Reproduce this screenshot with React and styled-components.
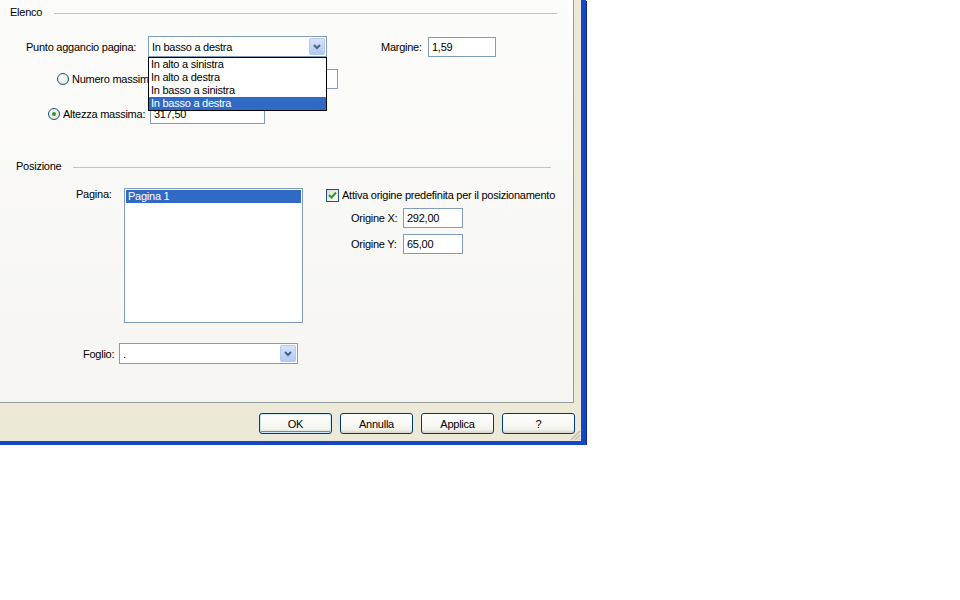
import React from "react"
import styled, { createGlobalStyle } from "styled-components"

const Global = createGlobalStyle`
  html, body {
    margin: 0;
    padding: 0;
    background: #ffffff;
  }
  body {
    font-family: "Liberation Sans", Arial, sans-serif;
    font-size: 11px;
    letter-spacing: -0.25px;
    color: #000;
  }
`

const Window = styled.div`
  width: 581px;
  height: 441px;
  background: #ece9d8;
  border-right: 5px solid #1646c8;
  border-bottom: 4px solid #1646c8;
  box-shadow: 1px 1px 0 #0a2a8f;
  display: flex;
  flex-direction: column;
`

const Panel = styled.div`
  width: 574px;
  height: 403px;
  box-sizing: border-box;
  background: linear-gradient(#fcfcfb, #f6f5f1);
  border-right: 1px solid #919b9c;
  border-bottom: 1px solid #919b9c;
  display: flex;
  flex-direction: column;
`

const GroupHeader = styled.div`
  height: 24px;
  display: flex;
  align-items: center;
  gap: 12px;
  padding-left: ${p => p.$left}px;
  padding-right: ${p => p.$right}px;
  margin-top: ${p => p.$top || 0}px;

  &::after {
    content: "";
    flex: 1;
    height: 1px;
    margin-top: 2px;
    background: #c4c4bc;
  }
`

const Row = styled.div`
  display: flex;
  align-items: center;
  padding-left: ${p => p.$left}px;
  margin-top: ${p => p.$top}px;
  height: ${p => p.$height || 20}px;
`

const Label = styled.span`
  display: inline-block;
  width: ${p => p.$width}px;
  flex-shrink: 0;
  white-space: nowrap;
  overflow: hidden;
`

const Input = styled.div`
  width: ${p => p.$width}px;
  height: 20px;
  box-sizing: border-box;
  border: 1px solid #7f9db9;
  background: #fff;
  padding: 2px 3px;
  line-height: 14px;
  margin-left: ${p => p.$gap || 0}px;
  flex-shrink: 0;
`

const ComboWrap = styled.div`
  position: relative;
  width: 179px;
  height: 21px;
  flex-shrink: 0;
`

const ComboBox = styled.div`
  height: 21px;
  box-sizing: border-box;
  border: 1px solid #7f9db9;
  background: #fff;
  display: flex;
  align-items: center;
  padding-left: 3px;
  padding-right: 1px;
`

const ComboText = styled.span`
  flex: 1;
`

const ArrowButton = styled.div`
  width: 16px;
  height: 17px;
  border-radius: 2px;
  border: 1px solid #b6c9ee;
  box-sizing: border-box;
  background: linear-gradient(#d6e3fb, #b3c9f4);
  display: flex;
  align-items: center;
  justify-content: center;
`

const DropList = styled.div`
  position: absolute;
  top: 21px;
  left: 0;
  width: 179px;
  box-sizing: border-box;
  border: 1px solid #000;
  background: #fff;
  z-index: 2;
`

const DropItem = styled.div`
  height: 13px;
  line-height: 13px;
  padding-left: 2px;
  background: ${p => (p.$selected ? "#316ac5" : "transparent")};
  color: ${p => (p.$selected ? "#fff" : "#000")};
`

const Radio = styled.span`
  width: 12px;
  height: 12px;
  border-radius: 50%;
  box-sizing: border-box;
  border: 1px solid #1c5180;
  background: radial-gradient(circle at 40% 35%, #ffffff, #dcdbd3);
  margin-right: 3px;
  flex-shrink: 0;
  display: flex;
  align-items: center;
  justify-content: center;

  &::after {
    content: "";
    width: 4px;
    height: 4px;
    border-radius: 50%;
    background: ${p => (p.$checked ? "#21a121" : "transparent")};
  }
`

const Check = styled.span`
  width: 13px;
  height: 13px;
  box-sizing: border-box;
  border: 1px solid #1c5180;
  background: linear-gradient(135deg, #dcdbd3, #ffffff);
  margin-right: 3px;
  flex-shrink: 0;
  display: flex;
  align-items: center;
  justify-content: center;
`

const Block = styled.div`
  display: flex;
  align-items: flex-start;
  padding-left: 76px;
  margin-top: 10px;
`

const ListBox = styled.div`
  width: 179px;
  height: 135px;
  box-sizing: border-box;
  border: 1px solid #7f9db9;
  background: #fff;
  padding: 1px;
  flex-shrink: 0;
`

const ListItem = styled.div`
  height: 13px;
  line-height: 13px;
  padding-left: 2px;
  background: ${p => (p.$selected ? "#316ac5" : "transparent")};
  color: ${p => (p.$selected ? "#fff" : "#000")};
`

const RightColumn = styled.div`
  margin-left: 23px;
  display: flex;
  flex-direction: column;
  gap: 6px;
`

const CheckRow = styled.div`
  display: flex;
  align-items: center;
  height: 14px;
`

const OriginRow = styled.div`
  display: flex;
  align-items: center;
  padding-left: 25px;
  height: 20px;
`

const Footer = styled.div`
  position: relative;
  flex: 1;
  display: flex;
  justify-content: flex-end;
  align-items: flex-start;
  gap: 8px;
  padding-top: 10px;
  padding-right: 6px;
`

const Button = styled.button`
  width: 73px;
  height: 21px;
  font-family: "Liberation Sans", Arial, sans-serif;
  font-size: 11px;
  letter-spacing: -0.25px;
  color: #000;
  border: 1px solid #003c74;
  border-radius: 3px;
  background: linear-gradient(#ffffff, #f3f3ee 80%, #d8d3c8);
  box-shadow: ${p => (p.$default ? "inset 0 0 0 1px #cee7ff, inset 0 -1px 0 1px #6982ee" : "none")};
  padding: 0;
`

const Grip = styled.svg`
  position: absolute;
  right: 0;
  bottom: 0;
`

function Chevron() {
  return (
    <svg width="8" height="6" viewBox="0 0 8 6">
      <path d="M1 1 L4 4 L7 1" fill="none" stroke="#4d6185" strokeWidth="2" />
    </svg>
  )
}

function Combo({ value, children }) {
  return (
    <ComboWrap>
      <ComboBox>
        <ComboText>{value}</ComboText>
        <ArrowButton><Chevron /></ArrowButton>
      </ComboBox>
      {children}
    </ComboWrap>
  )
}

const anchors = ["In alto a sinistra", "In alto a destra", "In basso a sinistra", "In basso a destra"]

export default function App() {
  return (
    <>
      <Global />
      <Window>
        <Panel>
          <GroupHeader $left={10} $right={16}>Elenco</GroupHeader>

          <Row $left={26} $top={12} $height={21}>
            <Label $width={122}>Punto aggancio pagina:</Label>
            <Combo value="In basso a destra">
              <DropList>
                {anchors.map(a => (
                  <DropItem key={a} $selected={a === "In basso a destra"}>{a}</DropItem>
                ))}
              </DropList>
            </Combo>
            <Label $width={47} style={{ marginLeft: 54 }}>Margine:</Label>
            <Input $width={68}>1,59</Input>
          </Row>

          {/* the open list covers the rest of this label and most of its box */}
          <Row $left={57} $top={12}>
            <Radio />
            <Label $width={76}>Numero massimo di righe:</Label>
            <Input $width={115} $gap={75} />
          </Row>

          <Row $left={48} $top={15}>
            <Radio $checked />
            <Label $width={87}>Altezza massima:</Label>
            <Input $width={115}>317,50</Input>
          </Row>

          <GroupHeader $left={16} $right={22} $top={30}>Posizione</GroupHeader>

          <Block>
            <Label $width={48}>Pagina:</Label>
            <ListBox>
              <ListItem $selected>Pagina 1</ListItem>
            </ListBox>
            <RightColumn>
              <CheckRow>
                <Check>
                  <svg width="9" height="8" viewBox="0 0 9 8">
                    <path d="M1 4 L3.5 6.5 L8 1.5" fill="none" stroke="#21a121" strokeWidth="2" />
                  </svg>
                </Check>
                Attiva origine predefinita per il posizionamento
              </CheckRow>
              <OriginRow>
                <Label $width={52}>Origine X:</Label>
                <Input $width={60}>292,00</Input>
              </OriginRow>
              <OriginRow>
                <Label $width={52}>Origine Y:</Label>
                <Input $width={60}>65,00</Input>
              </OriginRow>
            </RightColumn>
          </Block>

          <Row $left={83} $top={20} $height={21}>
            <Label $width={36}>Foglio:</Label>
            <Combo value="." />
          </Row>
        </Panel>

        <Footer>
          <Button $default>OK</Button>
          <Button>Annulla</Button>
          <Button>Applica</Button>
          <Button>?</Button>
          <Grip width="13" height="13" viewBox="0 0 13 13">
            <path d="M12 3 L3 12 M12 7 L7 12 M12 11 L11 12" stroke="#c2bfb0" strokeWidth="1.5" />
          </Grip>
        </Footer>
      </Window>
    </>
  )
}
